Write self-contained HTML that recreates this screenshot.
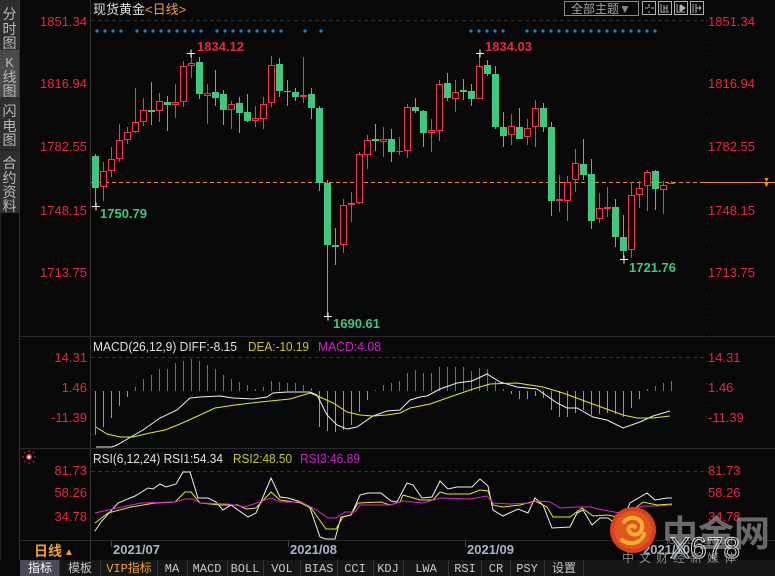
<!DOCTYPE html>
<html><head><meta charset="utf-8"><style>
html,body{margin:0;padding:0;background:#080808;width:775px;height:576px;overflow:hidden}
svg{display:block;font-family:"Liberation Sans","Noto Sans CJK SC",sans-serif}
.ax{fill:#e8283c;font-size:13px}
.sb{fill:#b8b8b8;font-size:14px;text-anchor:middle}
.tab{fill:#c8c8c8;font-size:12px;font-family:"Liberation Mono","Noto Sans CJK SC",monospace;text-anchor:middle}
.g{fill:#3cc87f}
.rw{stroke:#ff3050}
.gw{stroke:#3cc87f}
</style></head><body>
<svg width="775" height="576" viewBox="0 0 775 576" xmlns="http://www.w3.org/2000/svg">
<rect width="775" height="576" fill="#080808"/>
<!-- sidebar -->
<rect x="0" y="0" width="19" height="213" fill="#2e2e2e"/>
<rect x="0" y="50" width="19" height="47" fill="#4a4a4a"/>
<line x1="0" y1="150" x2="19" y2="150" stroke="#1a1a1a"/>
<line x1="19.5" y1="0" x2="19.5" y2="560" stroke="#333"/>
<line x1="0.5" y1="213" x2="0.5" y2="560" stroke="#222"/>
<text class="sb" x="9.5" y="19">分</text><text class="sb" x="9.5" y="34">时</text><text class="sb" x="9.5" y="48">图</text>
<text class="sb" x="9.5" y="67" style="font-family:'Liberation Mono',monospace">K</text><text class="sb" x="9.5" y="82">线</text><text class="sb" x="9.5" y="96">图</text>
<text class="sb" x="9.5" y="116">闪</text><text class="sb" x="9.5" y="131">电</text><text class="sb" x="9.5" y="145">图</text>
<text class="sb" x="9.5" y="168">合</text><text class="sb" x="9.5" y="183">约</text><text class="sb" x="9.5" y="197">资</text><text class="sb" x="9.5" y="211">料</text>

<!-- axes and separators -->
<line x1="90.5" y1="0" x2="90.5" y2="560" stroke="#333"/>
<line x1="706.5" y1="20" x2="706.5" y2="540" stroke="#333" stroke-dasharray="1,10"/>
<line x1="20" y1="336.5" x2="775" y2="336.5" stroke="#2a2a2a"/>
<line x1="20" y1="448.5" x2="775" y2="448.5" stroke="#2a2a2a"/>
<line x1="20" y1="540.5" x2="775" y2="540.5" stroke="#2a2a2a"/>
<line x1="91" y1="20.5" x2="706" y2="20.5" stroke="#333" stroke-dasharray="4,3"/>
<line x1="91" y1="357.5" x2="706" y2="357.5" stroke="#333" stroke-dasharray="4,3"/>
<line x1="91" y1="471.5" x2="706" y2="471.5" stroke="#333" stroke-dasharray="4,3"/>

<!-- axis labels -->
<g class="ax" text-anchor="end">
<text x="87" y="26">1851.34</text><text x="87" y="88">1816.94</text><text x="87" y="151">1782.55</text><text x="87" y="215">1748.15</text><text x="87" y="277">1713.75</text>
<text x="87" y="362">14.31</text><text x="87" y="392">1.46</text><text x="87" y="422">-11.39</text>
<text x="87" y="475">81.73</text><text x="87" y="497">58.26</text><text x="87" y="521">34.78</text>
</g>
<g class="ax">
<text x="708" y="26">1851.34</text><text x="708" y="88">1816.94</text><text x="708" y="151">1782.55</text><text x="708" y="215">1748.15</text><text x="708" y="277">1713.75</text>
<text x="708" y="362">14.31</text><text x="708" y="392">1.46</text><text x="708" y="422">-11.39</text>
<text x="708" y="475">81.73</text><text x="708" y="497">58.26</text><text x="708" y="521">34.78</text>
</g>

<!-- title -->
<text x="93" y="14" font-size="13" fill="#e0e0e0">现货黄金<tspan fill="#e8a040">&lt;日线&gt;</tspan></text>
<rect x="564.5" y="1.5" width="74" height="14" fill="none" stroke="#8a8a8a"/>
<text x="571" y="13" font-size="12" fill="#a8a8a8">全部主题<tspan fill="#8a8a8a">▼</tspan></text>
<g fill="none" stroke="#b0b0b0">
<rect x="642.5" y="1.5" width="13" height="13"/><rect x="658.5" y="1.5" width="13" height="13"/><rect x="674.5" y="1.5" width="13" height="13"/><rect x="690.5" y="1.5" width="13" height="13"/>
<path d="M649 4v4M649 11v2M645 8h3M651 8h3"/>
<path d="M661 4v8h8M664 5v6M667 5v6M664 8h3"/>
<path d="M677 4v8h8M680 5v6"/><path d="M681 5l4 3-4 3z" fill="#b0b0b0"/>
<path d="M693 4v9M696 4v9M696 8h5M699 6l2 2-2 2"/>
</g>

<!-- blue dots -->
<g fill="#1e80d0">
<circle cx="97" cy="31" r="1.6"/><circle cx="105" cy="31" r="1.6"/><circle cx="113" cy="31" r="1.6"/><circle cx="121" cy="31" r="1.6"/>
<circle cx="137" cy="31" r="1.6"/><circle cx="145" cy="31" r="1.6"/><circle cx="153" cy="31" r="1.6"/><circle cx="161" cy="31" r="1.6"/><circle cx="169" cy="31" r="1.6"/><circle cx="177" cy="31" r="1.6"/><circle cx="185" cy="31" r="1.6"/><circle cx="193" cy="31" r="1.6"/><circle cx="201" cy="31" r="1.6"/>
<circle cx="217" cy="31" r="1.6"/><circle cx="225" cy="31" r="1.6"/><circle cx="233" cy="31" r="1.6"/><circle cx="241" cy="31" r="1.6"/><circle cx="249" cy="31" r="1.6"/><circle cx="257" cy="31" r="1.6"/><circle cx="265" cy="31" r="1.6"/><circle cx="273" cy="31" r="1.6"/><circle cx="281" cy="31" r="1.6"/>
<circle cx="305" cy="31" r="1.6"/><circle cx="321" cy="31" r="1.6"/>
<circle cx="471" cy="31" r="1.6"/><circle cx="479" cy="31" r="1.6"/><circle cx="487" cy="31" r="1.6"/><circle cx="495" cy="31" r="1.6"/><circle cx="503" cy="31" r="1.6"/>
<circle cx="527" cy="31" r="1.6"/><circle cx="535" cy="31" r="1.6"/><circle cx="543" cy="31" r="1.6"/><circle cx="551" cy="31" r="1.6"/><circle cx="559" cy="31" r="1.6"/><circle cx="567" cy="31" r="1.6"/><circle cx="575" cy="31" r="1.6"/><circle cx="583" cy="31" r="1.6"/><circle cx="591" cy="31" r="1.6"/><circle cx="599" cy="31" r="1.6"/><circle cx="607" cy="31" r="1.6"/><circle cx="615" cy="31" r="1.6"/><circle cx="623" cy="31" r="1.6"/><circle cx="631" cy="31" r="1.6"/><circle cx="639" cy="31" r="1.6"/><circle cx="647" cy="31" r="1.6"/><circle cx="655" cy="31" r="1.6"/>
</g>

<!-- orange dashed current price -->
<line x1="91" y1="182.5" x2="703" y2="182.5" stroke="#f0901c" stroke-dasharray="4,3"/>
<line x1="703" y1="182.5" x2="775" y2="182.5" stroke="#f0901c"/>
<text x="763" y="182" font-size="7" fill="#f0901c">▼</text><text x="763" y="187" font-size="7" fill="#f0901c">▼</text>

<!-- candles -->
<g stroke-width="1">
<line x1="95.5" y1="154" x2="95.5" y2="206" class="gw"/><rect x="92" y="156" width="7" height="32" class="g"/>
<line x1="103.5" y1="162" x2="103.5" y2="201" class="rw"/><rect x="100.5" y="171.5" width="6" height="15" fill="#080808" class="rw"/>
<line x1="111.5" y1="147" x2="111.5" y2="177" class="rw"/><rect x="108.5" y="159.5" width="6" height="11" fill="#080808" class="rw"/>
<line x1="119.5" y1="124" x2="119.5" y2="162" class="rw"/><rect x="116.5" y="140.5" width="6" height="18" fill="#080808" class="rw"/>
<line x1="127.5" y1="127" x2="127.5" y2="144" class="rw"/><rect x="124.5" y="132.5" width="6" height="7" fill="#080808" class="rw"/>
<line x1="135.5" y1="88" x2="135.5" y2="133" class="rw"/><rect x="132.5" y="122.5" width="6" height="9" fill="#080808" class="rw"/>
<line x1="143.5" y1="98" x2="143.5" y2="126" class="rw"/><rect x="140.5" y="110.5" width="6" height="11" fill="#080808" class="rw"/>
<line x1="151.5" y1="82" x2="151.5" y2="125" class="gw"/><rect x="148" y="110" width="7" height="2" class="g"/>
<line x1="159.5" y1="93" x2="159.5" y2="122" class="rw"/><rect x="156.5" y="101.5" width="6" height="9" fill="#080808" class="rw"/>
<line x1="167.5" y1="96" x2="167.5" y2="131" class="gw"/><rect x="164" y="102" width="7" height="3" class="g"/>
<line x1="175.5" y1="84" x2="175.5" y2="118" class="rw"/><rect x="172.5" y="102.5" width="6" height="2" fill="#080808" class="rw"/>
<line x1="183.5" y1="61" x2="183.5" y2="107" class="rw"/><rect x="180.5" y="66.5" width="6" height="35" fill="#080808" class="rw"/>
<line x1="191.5" y1="53" x2="191.5" y2="78" class="rw"/><rect x="188.5" y="63.5" width="6" height="2" fill="#080808" class="rw"/>
<line x1="199.5" y1="57" x2="199.5" y2="99" class="gw"/><rect x="196" y="62" width="7" height="32" class="g"/>
<line x1="207.5" y1="84" x2="207.5" y2="124" class="rw"/><rect x="204.5" y="93.5" width="6" height="2" fill="#080808" class="rw"/>
<line x1="215.5" y1="70" x2="215.5" y2="106" class="gw"/><rect x="212" y="92" width="7" height="6" class="g"/>
<line x1="223.5" y1="90" x2="223.5" y2="125" class="gw"/><rect x="220" y="94" width="7" height="16" class="g"/>
<line x1="231.5" y1="101" x2="231.5" y2="129" class="rw"/><rect x="228.5" y="104.5" width="6" height="5" fill="#080808" class="rw"/>
<line x1="239.5" y1="97" x2="239.5" y2="133" class="gw"/><rect x="236" y="103" width="7" height="10" class="g"/>
<line x1="247.5" y1="94" x2="247.5" y2="122" class="gw"/><rect x="244" y="112" width="7" height="9" class="g"/>
<line x1="255.5" y1="106" x2="255.5" y2="127" class="rw"/><rect x="252.5" y="118.5" width="6" height="2" fill="#080808" class="rw"/>
<line x1="263.5" y1="97" x2="263.5" y2="129" class="rw"/><rect x="260.5" y="104.5" width="6" height="14" fill="#080808" class="rw"/>
<line x1="271.5" y1="56" x2="271.5" y2="107" class="rw"/><rect x="268.5" y="65.5" width="6" height="37" fill="#080808" class="rw"/>
<line x1="279.5" y1="58" x2="279.5" y2="97" class="gw"/><rect x="276" y="64" width="7" height="27" class="g"/>
<line x1="287.5" y1="80" x2="287.5" y2="106" class="gw"/><rect x="284" y="91" width="7" height="1" class="g"/>
<line x1="295.5" y1="88" x2="295.5" y2="101" class="gw"/><rect x="292" y="92" width="7" height="5" class="g"/>
<line x1="303.5" y1="57" x2="303.5" y2="103" class="rw"/><rect x="300" y="95" width="7" height="2" fill="#ff3050"/>
<line x1="311.5" y1="88" x2="311.5" y2="119" class="gw"/><rect x="308" y="94" width="7" height="14" class="g"/>
<line x1="319.5" y1="106" x2="319.5" y2="191" class="gw"/><rect x="316" y="108" width="7" height="75" class="g"/>
<line x1="327.5" y1="180" x2="327.5" y2="316" class="gw"/><rect x="324" y="183" width="7" height="62" class="g"/>
<line x1="335.5" y1="228" x2="335.5" y2="265" class="gw"/><rect x="332" y="245" width="7" height="2" class="g"/>
<line x1="343.5" y1="199" x2="343.5" y2="253" class="rw"/><rect x="340.5" y="205.5" width="6" height="39" fill="#080808" class="rw"/>
<line x1="351.5" y1="192" x2="351.5" y2="222" class="rw"/><rect x="348" y="203" width="7" height="2" fill="#ff3050"/>
<line x1="359.5" y1="152" x2="359.5" y2="204" class="rw"/><rect x="356.5" y="154.5" width="6" height="48" fill="#080808" class="rw"/>
<line x1="367.5" y1="135" x2="367.5" y2="169" class="rw"/><rect x="364.5" y="140.5" width="6" height="14" fill="#080808" class="rw"/>
<line x1="375.5" y1="124" x2="375.5" y2="151" class="gw"/><rect x="372" y="139" width="7" height="2" class="g"/>
<line x1="383.5" y1="127" x2="383.5" y2="157" class="rw"/><rect x="380.5" y="139.5" width="6" height="2" fill="#080808" class="rw"/>
<line x1="391.5" y1="129" x2="391.5" y2="162" class="gw"/><rect x="388" y="139" width="7" height="13" class="g"/>
<line x1="399.5" y1="137" x2="399.5" y2="155" class="rw"/><rect x="396" y="151" width="7" height="1" fill="#ff3050"/>
<line x1="407.5" y1="104" x2="407.5" y2="158" class="rw"/><rect x="404.5" y="107.5" width="6" height="43" fill="#080808" class="rw"/>
<line x1="415.5" y1="98" x2="415.5" y2="113" class="gw"/><rect x="412" y="107" width="7" height="4" class="g"/>
<line x1="423.5" y1="110" x2="423.5" y2="147" class="gw"/><rect x="420" y="111" width="7" height="22" class="g"/>
<line x1="431.5" y1="119" x2="431.5" y2="152" class="rw"/><rect x="428.5" y="130.5" width="6" height="2" fill="#080808" class="rw"/>
<line x1="439.5" y1="80" x2="439.5" y2="141" class="rw"/><rect x="436.5" y="84.5" width="6" height="46" fill="#080808" class="rw"/>
<line x1="447.5" y1="73" x2="447.5" y2="101" class="gw"/><rect x="444" y="83" width="7" height="15" class="g"/>
<line x1="455.5" y1="80" x2="455.5" y2="112" class="rw"/><rect x="452.5" y="92.5" width="6" height="6" fill="#080808" class="rw"/>
<line x1="463.5" y1="79" x2="463.5" y2="100" class="gw"/><rect x="460" y="90" width="7" height="2" class="g"/>
<line x1="471.5" y1="84" x2="471.5" y2="106" class="gw"/><rect x="468" y="91" width="7" height="8" class="g"/>
<line x1="479.5" y1="53" x2="479.5" y2="99" class="rw"/><rect x="476.5" y="66.5" width="6" height="32" fill="#080808" class="rw"/>
<line x1="487.5" y1="60" x2="487.5" y2="76" class="gw"/><rect x="484" y="65" width="7" height="9" class="g"/>
<line x1="495.5" y1="66" x2="495.5" y2="129" class="gw"/><rect x="492" y="74" width="7" height="53" class="g"/>
<line x1="503.5" y1="112" x2="503.5" y2="147" class="gw"/><rect x="500" y="127" width="7" height="9" class="g"/>
<line x1="511.5" y1="114" x2="511.5" y2="145" class="rw"/><rect x="508.5" y="126.5" width="6" height="8" fill="#080808" class="rw"/>
<line x1="519.5" y1="108" x2="519.5" y2="139" class="gw"/><rect x="516" y="127" width="7" height="12" class="g"/>
<line x1="527.5" y1="119" x2="527.5" y2="145" class="rw"/><rect x="524.5" y="128.5" width="6" height="8" fill="#080808" class="rw"/>
<line x1="535.5" y1="100" x2="535.5" y2="147" class="rw"/><rect x="532.5" y="108.5" width="6" height="18" fill="#080808" class="rw"/>
<line x1="543.5" y1="103" x2="543.5" y2="132" class="gw"/><rect x="540" y="108" width="7" height="19" class="g"/>
<line x1="551.5" y1="122" x2="551.5" y2="216" class="gw"/><rect x="548" y="127" width="7" height="74" class="g"/>
<line x1="559.5" y1="175" x2="559.5" y2="212" class="rw"/><rect x="556" y="199" width="7" height="2" fill="#ff3050"/>
<line x1="567.5" y1="176" x2="567.5" y2="221" class="rw"/><rect x="564.5" y="182.5" width="6" height="18" fill="#080808" class="rw"/>
<line x1="575.5" y1="149" x2="575.5" y2="192" class="rw"/><rect x="572.5" y="163.5" width="6" height="16" fill="#080808" class="rw"/>
<line x1="583.5" y1="139" x2="583.5" y2="180" class="gw"/><rect x="580" y="164" width="7" height="11" class="g"/>
<line x1="591.5" y1="159" x2="591.5" y2="229" class="gw"/><rect x="588" y="174" width="7" height="47" class="g"/>
<line x1="599.5" y1="193" x2="599.5" y2="223" class="rw"/><rect x="596.5" y="208.5" width="6" height="10" fill="#080808" class="rw"/>
<line x1="607.5" y1="187" x2="607.5" y2="217" class="rw"/><rect x="604" y="207" width="7" height="2" fill="#ff3050"/>
<line x1="615.5" y1="199" x2="615.5" y2="247" class="gw"/><rect x="612" y="207" width="7" height="30" class="g"/>
<line x1="623.5" y1="215" x2="623.5" y2="259" class="gw"/><rect x="620" y="237" width="7" height="14" class="g"/>
<line x1="631.5" y1="182" x2="631.5" y2="258" class="rw"/><rect x="628.5" y="195.5" width="6" height="54" fill="#080808" class="rw"/>
<line x1="639.5" y1="181" x2="639.5" y2="208" class="rw"/><rect x="636.5" y="188.5" width="6" height="6" fill="#080808" class="rw"/>
<line x1="647.5" y1="170" x2="647.5" y2="211" class="rw"/><rect x="644.5" y="172.5" width="6" height="13" fill="#080808" class="rw"/>
<line x1="655.5" y1="170" x2="655.5" y2="210" class="gw"/><rect x="652" y="171" width="7" height="18" class="g"/>
<line x1="663.5" y1="181" x2="663.5" y2="214" class="rw"/><rect x="660.5" y="185.5" width="6" height="4" fill="#080808" class="rw"/>
<line x1="671.5" y1="181" x2="671.5" y2="184" class="rw"/><rect x="668" y="183" width="7" height="1" fill="#ff3050"/>
</g>

<!-- extreme markers -->
<g stroke="#fff"><path d="M187 53.5h8M191 49.5v8"/><path d="M92 206.5h8M96 202.5v8"/><path d="M324 316.5h8M328 312.5v8"/><path d="M476 53.5h8M480 49.5v8"/><path d="M620 259.5h8M624 255.5v8"/></g>
<g font-size="13" font-weight="bold">
<text x="197" y="51" fill="#e8283c">1834.12</text>
<text x="100" y="218" fill="#3cc87f">1750.79</text>
<text x="333" y="328" fill="#3cc87f">1690.61</text>
<text x="485" y="51" fill="#e8283c">1834.03</text>
<text x="629" y="272" fill="#3cc87f">1721.76</text>
</g>

<!-- MACD -->
<text x="93" y="351" font-size="13" fill="#e0e0e0" textLength="144" lengthAdjust="spacingAndGlyphs">MACD(26,12,9) DIFF:-8.15</text>
<text x="248" y="351" font-size="13" fill="#c8c820" textLength="61" lengthAdjust="spacingAndGlyphs">DEA:-10.19</text>
<text x="318" y="351" font-size="13" fill="#d020d0" textLength="63" lengthAdjust="spacingAndGlyphs">MACD:4.08</text>
<g stroke="#3cc87f">
<path d="M95.5 391v44M103.5 391v36M111.5 391v27M119.5 391v15M127.5 391v6M319.5 391v36M327.5 391v40M335.5 391v41M343.5 391v39M351.5 391v34M359.5 391v21M367.5 391v9M511.5 391v3M519.5 391v8M527.5 391v8M535.5 391v5M543.5 391v7M551.5 391v19M559.5 391v26M567.5 391v26M575.5 391v22M583.5 391v19M591.5 391v24M599.5 391v23M607.5 391v22M615.5 391v23M623.5 391v26M631.5 391v17M639.5 391v8"/>
</g>
<g stroke="#e8384f">
<path d="M135.5 391v-4M143.5 391v-12M151.5 391v-16M159.5 391v-22M167.5 391v-22M175.5 391v-28M183.5 391v-30M191.5 391v-32M199.5 391v-30M207.5 391v-26M215.5 391v-22M223.5 391v-16M231.5 391v-12M239.5 391v-9M247.5 391v-6M255.5 391v-2M263.5 391v-4M271.5 391v-10M279.5 391v-9M287.5 391v-8M295.5 391v-8M303.5 391v-6M311.5 391v-3M375.5 391v-1M383.5 391v-6M391.5 391v-8M399.5 391v-10M407.5 391v-18M415.5 391v-21M423.5 391v-18M431.5 391v-18M439.5 391v-24M447.5 391v-24M455.5 391v-24M463.5 391v-24M471.5 391v-20M479.5 391v-23M487.5 391v-22M495.5 391v-10M503.5 391v-2M647.5 391v-2M655.5 391v-5M663.5 391v-8M671.5 391v-10"/>
</g>
<polyline fill="none" stroke="#f0f0f0" points="96,447 112,447 117,445 143,430 160,418 177,410 190,398 200,397 220,396 233,398 253,399 267,397 273,393 287,392 310,392 317,395 327,415 337,425 347,429 357,427 373,416 387,411 400,410 410,400 420,397 427,396 440,389 457,383 472,381 487,374 500,382 517,387 537,389 557,403 567,408 577,408 593,417 607,420 623,428 640,422 653,416 670,411"/>
<polyline fill="none" stroke="#e8e820" points="96,427 107,434 120,437 133,437 150,433 165,430 180,424 200,415 215,408 235,405 260,402 290,399 310,393 320,397 333,403 347,412 360,415 373,416 387,415 400,413 410,408 430,404 450,397 473,389 490,384 517,383 543,387 563,393 590,403 623,415 637,418 653,418 670,416"/>

<!-- RSI -->
<g fill="#e8283c"><circle cx="29" cy="457" r="3"/></g>
<g stroke="#e8283c" stroke-width="1"><path d="M29 450v2M29 462v2M22 457h2M34 457h2M24 452l1 1M34 452l-1 1M24 462l1-1M34 462l-1-1"/></g>
<circle cx="29" cy="457" r="1.5" fill="#fff"/>
<text x="93" y="463" font-size="13" fill="#e0e0e0" textLength="130" lengthAdjust="spacingAndGlyphs">RSI(6,12,24) RSI1:54.34</text>
<text x="233" y="463" font-size="13" fill="#c8c820" textLength="59" lengthAdjust="spacingAndGlyphs">RSI2:48.50</text>
<text x="300" y="463" font-size="13" fill="#d020d0" textLength="60" lengthAdjust="spacingAndGlyphs">RSI3:46.89</text>
<polyline fill="none" stroke="#f0f0f0" points="95,531 101,522 118,503 135,496 148,488 153,489 160,484 166,487 176,484 183,472 190,472 198,498 208,498 216,502 223,510 231,505 248,517 256,513 263,497 271,478 280,497 288,498 301,502 310,508 320,537 326,539 335,539 341,517 351,515 360,495 368,493 381,493 391,501 397,502 407,483 413,485 422,498 432,497 440,481 448,489 457,487 472,487 480,479 488,486 493,510 503,516 518,509 528,513 535,498 543,505 552,528 570,527 577,513 583,510 592,525 600,518 608,518 620,527 630,503 647,493 655,500 667,498 672,498"/>
<polyline fill="none" stroke="#e8e820" points="95,523 108,513 131,507 155,503 175,502 185,492 191,492 200,503 221,505 238,505 246,509 256,508 271,492 280,500 301,503 311,508 326,529 336,529 343,517 351,515 358,503 381,502 390,505 400,502 403,495 420,500 433,500 440,492 447,494 470,494 480,490 488,491 493,505 503,507 520,505 535,501 547,507 553,517 570,517 582,508 593,516 607,515 623,518 643,502 657,505 672,504"/>
<polyline fill="none" stroke="#e020e0" points="95,513 108,510 141,503 175,502 185,499 193,499 200,503 228,504 245,507 271,498 280,502 301,502 315,509 328,518 336,518 345,512 355,512 360,505 390,505 403,501 423,503 440,498 470,499 487,496 493,503 510,504 530,503 537,501 550,502 560,508 577,507 590,507 603,510 620,513 643,506 657,506 672,505"/>

<!-- date row -->
<text x="34" y="556" font-size="14" font-weight="bold" fill="#f0a030">日线</text>
<text x="64" y="555" font-size="10" fill="#f0a030">▲</text>
<g stroke="#444"><path d="M111.5 541v6M288.5 541v6M465.5 541v6M641.5 541v6"/></g>
<g font-size="13" font-weight="bold" fill="#a8b4c8">
<text x="113" y="554">2021/07</text><text x="290" y="554">2021/08</text><text x="467" y="554">2021/09</text><text x="643" y="554">2021/10</text>
</g>

<!-- tab bar -->
<rect x="20" y="560" width="755" height="16" fill="#161616"/>
<rect x="20" y="560" width="39" height="16" fill="#4a4a56"/>
<g stroke="#333"><path d="M59.5 560v16M100.5 560v16M157.5 560v16M187.5 560v16M227.5 560v16M263.5 560v16M300.5 560v16M337.5 560v16M373.5 560v16M403.5 560v16M448.5 560v16M481.5 560v16M510.5 560v16M544.5 560v16M583.5 560v16"/></g>
<text class="tab" x="40" y="572" style="fill:#fff">指标</text>
<text class="tab" x="80" y="572">模板</text>
<text class="tab" x="129" y="572" style="fill:#f0a030">VIP指标</text>
<text class="tab" x="172" y="572">MA</text>
<text class="tab" x="207" y="572">MACD</text>
<text class="tab" x="245" y="572">BOLL</text>
<text class="tab" x="282" y="572">VOL</text>
<text class="tab" x="319" y="572">BIAS</text>
<text class="tab" x="355" y="572">CCI</text>
<text class="tab" x="388" y="572">KDJ</text>
<text class="tab" x="426" y="572">LWA</text>
<text class="tab" x="465" y="572">RSI</text>
<text class="tab" x="496" y="572">CR</text>
<text class="tab" x="527" y="572">PSY</text>
<text class="tab" x="564" y="572">设置</text>

<!-- watermark -->
<circle cx="633" cy="530" r="23" fill="#d8401a"/>
<circle cx="633" cy="530" r="19" fill="#e05520"/>
<path d="M624 522c6-8 20-4 18 6-1 7-10 9-13 3-2-4 3-7 6-4M622 540c8 6 20 3 22-6" fill="none" stroke="#f8b030" stroke-width="4" stroke-linecap="round"/>
<text x="662" y="546" font-size="36" font-weight="bold" fill="#7a7a7a" opacity="0.85">中金网</text>
<text x="666" y="544" font-size="9" fill="#777">ICOLD.COM.CN</text>
<text x="670" y="558" font-size="30" fill="none" stroke="#ddd" stroke-width="1">X678</text>
<text x="622" y="562" font-size="12" fill="#8a8a8a" letter-spacing="5">中文财经新媒体</text>
</svg>
</body></html>
